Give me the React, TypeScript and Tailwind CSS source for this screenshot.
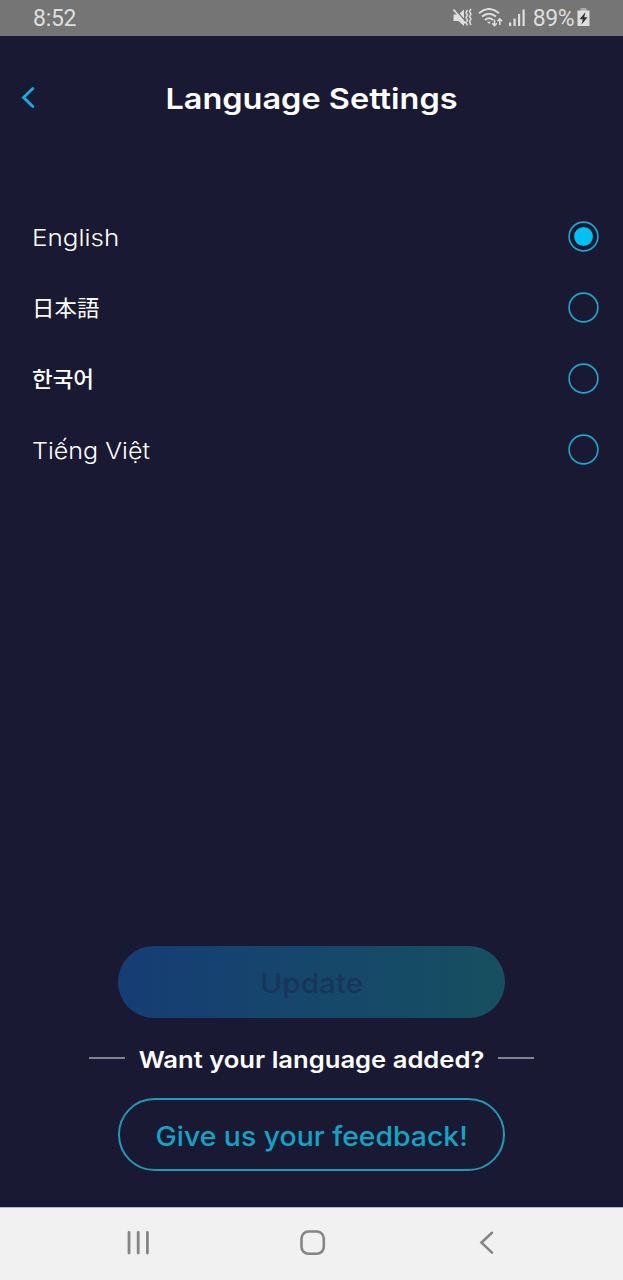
import { useState } from 'react';

interface Language {
  code: string;
  label: string;
  className: string;
}

const languages: Language[] = [
  { code: 'en', label: 'English', className: 'pt-1 text-[23px] font-light scale-x-[1.13]' },
  { code: 'ja', label: '日本語', className: 'pt-0.5 text-[22px] scale-x-[1.02]' },
  { code: 'ko', label: '한국어', className: 'pt-0.5 text-[22px] font-medium scale-x-[1.02]' },
  { code: 'vi', label: 'Tiếng Việt', className: 'pt-1 text-[23px] font-light scale-x-[1.09]' },
];

function StatusBar() {
  return (
    <div className="flex h-9 shrink-0 items-center justify-between bg-[#757575] pr-[33px] pl-[33px] font-[Roboto,sans-serif] text-[23px] leading-9 text-[#dedede]">
      <span className="pt-0.5 tracking-[-0.3px]">8:52</span>
      <div className="flex items-center">
        {/* muted speaker */}
        <svg width="20" height="20" viewBox="0 0 20 20" fill="none" className="mr-[5px]">
          <path d="M.5 6.500h5L11 1.500v16.500l-5.500-5h-5z" fill="#dedede" />
          <path d="M1.500 .5l12 14" stroke="#757575" strokeWidth="1.500" />
          <path d="M.5 1.500l12 14" stroke="#dedede" strokeWidth="1.700" />
          <path d="M14.500 2l-1.500 2.500 1.500 2.500-1.500 2.500 1.500 2.500-1.500 2.500 1.500 3M18 1l-1.500 2.500L18 6l-1.500 2.500L18 11l-1.500 2.500 1.500 3.500" stroke="#dedede" strokeWidth="1.500" />
        </svg>
        {/* wifi */}
        <svg width="25" height="20" viewBox="0 0 25 20" fill="none" stroke="#dedede" strokeWidth="2" className="mr-[5px]">
          <path d="M1 5.200Q11 -3.200 21 5.200M4 8.600Q11 2.800 18 8.600M7 12Q11 8.500 15 12" />
          <path d="M9 13.700h4L11 16z" fill="#dedede" stroke="none" />
          <path d="M16.500 11.500v6M14.200 15.300l2.300 2.400 2.300-2.400M21.800 17v-6M19.500 13.200l2.300-2.400 2.300 2.400" strokeWidth="1.500" />
        </svg>
        {/* signal */}
        <svg width="18" height="20" viewBox="0 0 18 20" fill="#dedede" className="mr-[7px]">
          <path d="M1 14.500h2.200V18H1zM5.500 10.500h2.200V18H5.500zM10 6h2.200v12H10zM14.500 1.500h2.200V18h-2.200z" />
        </svg>
        <span className="pt-0.5 tracking-[-0.5px]">89%</span>
        {/* battery */}
        <svg width="13" height="20" viewBox="0 0 13 20" className="ml-[3px]">
          <path d="M3.500 0h6v3h-6z" fill="#aaaaaa" />
          <path d="M.5 2.500h12V18H.5z" fill="#dedede" />
          <path d="M8.500 4L2.500 11.300h3.300L4.500 16.500l6-7.300H7.200z" fill="#303030" />
        </svg>
      </div>
    </div>
  );
}

function RadioMark({ checked }: { checked: boolean }) {
  return (
    <svg width="31" height="31" viewBox="0 0 31 31" fill="none">
      <circle cx="15.500" cy="15.500" r="14.400" stroke="#1fa6cd" strokeWidth="1.600" />
      {checked && <circle cx="15.500" cy="15.500" r="9.400" fill="#00bff3" />}
    </svg>
  );
}

function NavigationBar() {
  return (
    <div className="flex h-[73px] shrink-0 items-center justify-between border-t border-[#b9b9c2] bg-[#f1f1f1] pr-[123px] pb-1 pl-[124px] text-[#858585]">
      <svg width="28" height="28" viewBox="0 0 28 28" fill="none" stroke="currentColor" strokeWidth="2.800" strokeLinecap="round">
        <path d="M5 4.500v20.500M14.200 4.500v20.500M23.400 4.500v20.500" />
      </svg>
      <svg width="28" height="28" viewBox="0 0 28 28" fill="none" stroke="currentColor" strokeWidth="2.600">
        <rect x="3.500" y="3.500" width="22.300" height="22.300" rx="7" />
      </svg>
      <svg width="28" height="28" viewBox="0 0 28 28" fill="none" stroke="currentColor" strokeWidth="2.600" strokeLinecap="round">
        <path d="M20 4.800L9.500 14.600l10.500 10" />
      </svg>
    </div>
  );
}

export default function App() {
  const [selected, setSelected] = useState('en');

  return (
    <div className="flex h-screen w-full flex-col overflow-hidden bg-[#191933] font-[Inter,'Noto_Sans_CJK_JP',sans-serif] text-white">
      <StatusBar />

      <header className="mt-[39px] grid h-12 grid-cols-[56px_1fr_56px] items-center">
        <button aria-label="Back" className="pl-[19px]">
          <svg width="20" height="24" viewBox="0 0 20 24" fill="none" stroke="#16aee0" strokeWidth="2.800" strokeLinecap="round">
            <path d="M13.800 1.500L4.500 10.500l9.300 9" />
          </svg>
        </button>
        <h1 className="scale-x-[1.12] text-center text-[29px] font-semibold whitespace-nowrap">Language Settings</h1>
      </header>

      <ul className="mt-[78px] pr-6 pl-8">
        {languages.map((language) => (
          <li key={language.code} className="h-[71px]">
            <button
              onClick={() => setSelected(language.code)}
              className="flex h-[71px] w-full items-center justify-between"
            >
              <span lang={language.code} className={`origin-left ${language.className}`}>
                {language.label}
              </span>
              <RadioMark checked={selected === language.code} />
            </button>
          </li>
        ))}
      </ul>

      <footer className="mt-auto mb-9 flex flex-col items-center">
        <button
          disabled
          className="h-[72px] w-[387px] rounded-full bg-linear-to-r from-[#163d75] to-[#174f60] pt-1 text-[27px] font-medium text-[#18355b]"
        >
          <span className="inline-block scale-x-[1.1]">Update</span>
        </button>
        <div className="flex h-20 items-center">
          <span className="h-0.5 w-9 bg-[#85818f]" />
          <span className="w-[373px] scale-x-[1.113] pt-1 text-center text-[23px] font-semibold whitespace-nowrap">
            Want your language added?
          </span>
          <span className="h-0.5 w-9 bg-[#85818f]" />
        </div>
        <button className="h-[73px] w-[387px] rounded-full border-2 border-[#2199b7] pt-1.5 text-[27px] font-medium whitespace-nowrap text-[#16a3c3]">
          <span className="inline-block scale-x-[1.05]">Give us your feedback!</span>
        </button>
      </footer>

      <NavigationBar />
    </div>
  );
}
